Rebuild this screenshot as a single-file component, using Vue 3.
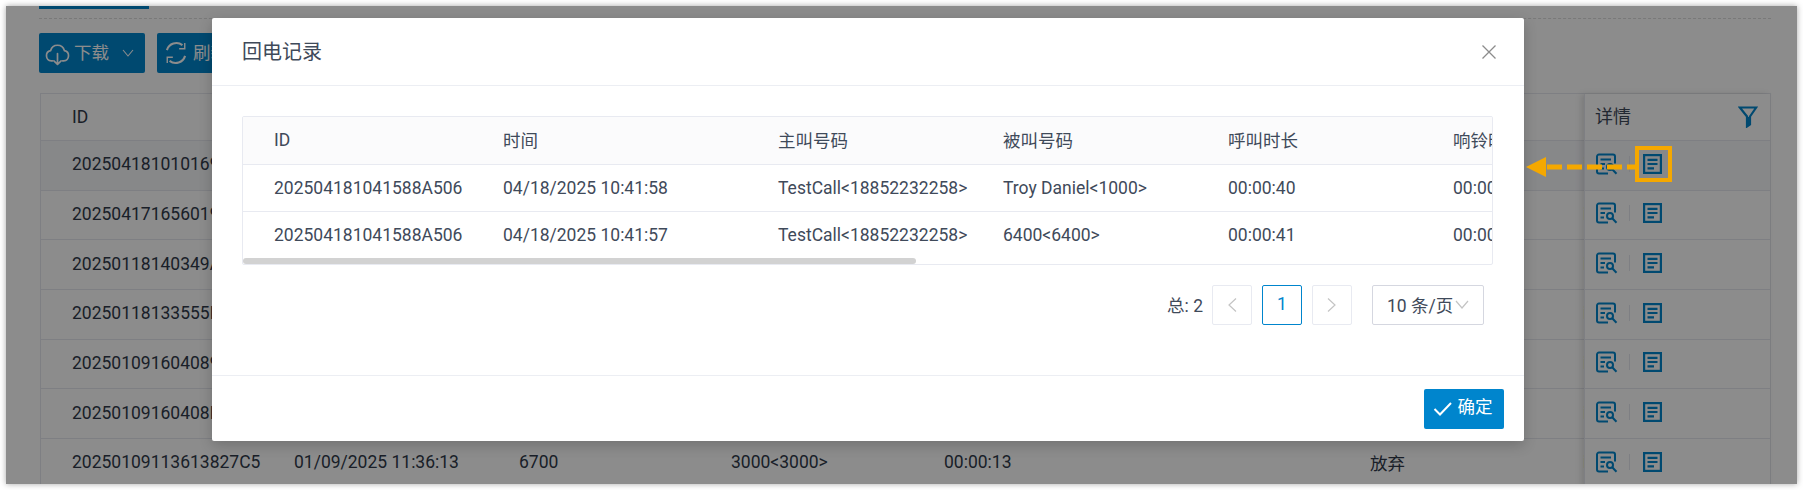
<script setup>
const bgRows = [
  { id: '202504181010169', hover: true },
  { id: '202504171656019' },
  { id: '20250118140349A' },
  { id: '20250118133555B' },
  { id: '202501091604089' },
  { id: '20250109160408B' },
  { id: '20250109113613827C5', time: '01/09/2025 11:36:13', from: '6700', to: '3000<3000>', dur: '00:00:13', status: '放弃' }
]
const modalRows = [
  ['202504181041588A506', '04/18/2025 10:41:58', 'TestCall<18852232258>', 'Troy Daniel<1000>', '00:00:40', '00:00:00'],
  ['202504181041588A506', '04/18/2025 10:41:57', 'TestCall<18852232258>', '6400<6400>', '00:00:41', '00:00:00']
]
const modalHead = ['ID', '时间', '主叫号码', '被叫号码', '呼叫时长', '响铃时长']
</script>

<template>
  <div class="root">
    <div class="page">
      <div class="tabs"><span class="tab-line"></span></div>
      <div class="toolbar">
        <button class="btn btn-down">
          <svg width="27" height="27" viewBox="0 0 24 24" fill="none" stroke="#fff" stroke-width="1.500" stroke-linecap="round" stroke-linejoin="round">
            <path d="M7.500 18.500H6.500a4.600 4.600 0 0 1-.6-9.100 6.300 6.300 0 0 1 12.200 0 4.600 4.600 0 0 1-.6 9.100h-1" />
            <path d="M12 12v9.500M8.800 18.500l3.200 3.200 3.200-3.200" />
          </svg>
          <span class="lift">下载</span>
          <svg class="caret" width="12" height="8" viewBox="0 0 12 8" fill="none" stroke="#fff" stroke-width="1.100"><path d="M1 1l5 6 5-6" /></svg>
        </button>
        <button class="btn btn-refresh">
          <svg width="28" height="28" viewBox="0 0 24 24" fill="none" stroke="#fff" stroke-width="1.800">
            <path d="M4.200 9.500A8.500 8.500 0 0 1 17.500 5.200" />
            <path d="M19.800 14.500A8.500 8.500 0 0 1 6.500 18.800" />
            <path d="M19.500 3.500v4.800h-4.800M4.500 20.500v-4.800h4.800" stroke-width="1.200" />
          </svg>
          <span class="lift">刷新</span>
        </button>
      </div>

      <div class="bg-table">
        <div class="bg-row bg-head">
          <span>ID</span><span></span><span></span><span></span><span></span><span></span><span>日</span>
        </div>
        <div v-for="r in bgRows" :key="r.id" class="bg-row" :class="{ hover: r.hover }">
          <span>{{ r.id }}</span>
          <span>{{ r.time }}</span>
          <span>{{ r.from }}</span>
          <span>{{ r.to }}</span>
          <span>{{ r.dur }}</span>
          <span>{{ r.status }}</span>
          <span class="clip-i">i</span>
        </div>

        <div class="fixed-col">
          <div class="fixed-head">
            <span class="fixed-title">详情</span>
            <svg width="20" height="22" viewBox="0 0 20 22" fill="none">
              <path d="M1.800 1.500h16.400L12 10.500V18.500l-3 2V10.500z" stroke="#0085cd" stroke-width="2.200" stroke-linejoin="miter" />
              <path d="M9 11h2.500v8L9 21z" fill="#0085cd" />
            </svg>
          </div>
          <div v-for="r in bgRows" :key="r.id" class="fixed-row" :class="{ hover: r.hover }">
            <svg class="ico" width="22" height="22" viewBox="0 0 22 22" fill="none" stroke="#0085cd" stroke-width="2">
              <path d="M19 10.500V3.500a2 2 0 0 0-2-2H3a2 2 0 0 0-2 2v15a2 2 0 0 0 2 2h9" />
              <path d="M4.500 6.500H15M4.500 11H9M4.500 15.500H8" />
              <circle cx="14" cy="14" r="3" />
              <path d="M16.200 16.200L20.500 20.800" />
            </svg>
            <i class="sep"></i>
            <svg class="ico" width="19" height="20" viewBox="0 0 19 20" fill="none" stroke="#0085cd" stroke-width="2.200">
              <rect x="1.100" y="1.100" width="16.800" height="17.800" />
              <path d="M4.500 5.800h10M4.500 10h10M4.500 14.300h6.500" />
            </svg>
          </div>
        </div>
      </div>

      <div class="overlay"></div>

      <div class="modal">
        <div class="modal-head">
          <span class="modal-title">回电记录</span>
          <svg width="16" height="16" viewBox="0 0 16 16" fill="none" stroke="#8c8c8c" stroke-width="1.300"><path d="M1.500 1.500l13 13M14.500 1.500l-13 13" /></svg>
        </div>
        <div class="modal-body">
          <div class="m-table">
            <div class="m-row m-head">
              <span v-for="h in modalHead" :key="h">{{ h }}</span>
            </div>
            <div v-for="(r, i) in modalRows" :key="i" class="m-row m-data">
              <span v-for="(c, j) in r" :key="j">{{ c }}</span>
            </div>
            <div class="m-scroll"><div class="m-thumb"></div></div>
          </div>
          <div class="pager">
            <span class="total">总: 2</span>
            <span class="pg pg-off">
              <svg width="10" height="16" viewBox="0 0 10 16" fill="none" stroke="#c4c4c4" stroke-width="1.200"><path d="M9 1.500L2 8l7 6.500" /></svg>
            </span>
            <span class="pg pg-on">1</span>
            <span class="pg pg-off">
              <svg width="10" height="16" viewBox="0 0 10 16" fill="none" stroke="#c4c4c4" stroke-width="1.200"><path d="M1 1.500L8 8l-7 6.500" /></svg>
            </span>
            <span class="size">
              <span>10 条/页</span>
              <svg width="14" height="9" viewBox="0 0 14 9" fill="none" stroke="#c4c4c4" stroke-width="1.200"><path d="M1 1l6 7 6-7" /></svg>
            </span>
          </div>
        </div>
        <div class="modal-foot">
          <button class="ok">
            <svg width="20" height="16" viewBox="0 0 20 16" fill="none" stroke="#fff" stroke-width="2"><path d="M1.500 8l5.500 5.500L18 2" /></svg>
            <span class="ok-text">确定</span>
          </button>
        </div>
      </div>

      <div class="mark-box"></div>
      <svg class="arrow" width="116" height="20" viewBox="0 0 116 20">
        <path d="M0 10L20 0v20z" fill="#f5a800" />
        <path d="M21 10H110" stroke="#f5a800" stroke-width="5" stroke-dasharray="15 5" fill="none" />
      </svg>
    </div>
  </div>
</template>

<style scoped>
.root {
  width: 1803px;
  height: 490px;
  padding: 6px;
  box-sizing: border-box;
  background: #fff;
  font-family: Roboto, "Noto Sans CJK SC", sans-serif;
  font-size: 17.500px;
  color: #3f4a5a;
}
.page {
  position: relative;
  width: 1791px;
  height: 478px;
  background: #fff;
  overflow: hidden;
  box-shadow: 0 0 6px rgba(0, 0, 0, .35);
}
.tabs {
  height: 12px;
  margin: 0 26px 0 33px;
  border-bottom: 1px dashed #dcdcdc;
}
.tab-line {
  display: block;
  width: 110px;
  height: 3px;
  background: #0085cd;
}
.toolbar {
  display: flex;
  gap: 12px;
  margin: 14px 0 0 33px;
}
.btn {
  height: 40px;
  display: flex;
  align-items: center;
  gap: 3px;
  padding: 0 0 0 5px;
  border: 0;
  border-radius: 2px;
  background: #0085cd;
  color: #fff;
  font: inherit;
}
.lift { padding-bottom: 3px; }
.btn-down { width: 106px; }
.btn-refresh { width: 120px; }
.caret { margin-left: 10px; }
.bg-table {
  position: relative;
  margin: 20px 26px 0 34px;
  border: 1px solid #e6e8ee;
  border-bottom: 0;
}
.bg-row {
  display: grid;
  grid-template-columns: 221px 225px 212px 213px 426px 213px 1fr;
  height: 49.670px;
  box-sizing: border-box;
  border-bottom: 1px solid #e6e8ee;
  align-items: center;
  white-space: nowrap;
  color: #303a4a;
}
.bg-row span { padding-left: 32px; overflow: hidden; padding-bottom: 2px; }
.bg-row span:first-child { padding-left: 31px; }
.bg-head { height: 47px; }
.bg-head span { padding-bottom: 0; }
.hover { background: #f6f7fa; }
.fixed-col {
  position: absolute;
  top: 0;
  right: 0;
  width: 186px;
  background: #fff;
  box-shadow: -3px 0 6px rgba(0, 0, 0, .12);
  border-left: 1px solid #e6e8ee;
  box-sizing: border-box;
}
.fixed-head {
  height: 47px;
  display: flex;
  align-items: center;
  justify-content: space-between;
  padding: 0 12px 0 10px;
  border-bottom: 1px solid #e6e8ee;
  box-sizing: border-box;
  font-size: 18px;
}
.fixed-title { padding-bottom: 4px; }
.fixed-row {
  height: 49.670px;
  display: flex;
  align-items: center;
  padding: 0 0 3px 11px;
  box-sizing: border-box;
  border-bottom: 1px solid #e6e8ee;
}
.fixed-row:not(.hover) { background: #fff; }
.ico { flex: none; }
.sep {
  width: 1px;
  height: 16px;
  background: #e6e8ee;
  margin: 0 13px 0 11px;
}
.overlay {
  position: absolute;
  inset: 0;
  background: rgba(0, 0, 0, .45);
}
.modal {
  position: absolute;
  left: 206px;
  top: 12px;
  width: 1312px;
  height: 423px;
  background: #fff;
  border-radius: 2px;
  box-shadow: 0 4px 14px rgba(0, 0, 0, .2);
  display: flex;
  flex-direction: column;
}
.modal-head {
  height: 68px;
  flex: none;
  box-sizing: border-box;
  padding: 0 27px 0 30px;
  display: flex;
  align-items: center;
  justify-content: space-between;
  border-bottom: 1px solid #eceef3;
}
.modal-title {
  font-size: 20px;
  color: #3f4a5a;
  padding-bottom: 2px;
}
.modal-body {
  flex: 1;
  padding: 30px 31px 0 30px;
}
.m-table {
  width: 1251px;
  box-sizing: border-box;
  border: 1px solid #e8eaf1;
  border-radius: 2px;
  overflow: hidden;
}
.m-row {
  display: grid;
  grid-template-columns: 229px 275px 225px 225px 225px 225px;
  align-items: center;
  white-space: nowrap;
  width: 1404px;
  box-sizing: border-box;
}
.m-row span { padding-left: 31px; }
.m-head {
  height: 48px;
  background: #fbfbfc;
  border-bottom: 1px solid #e8eaf1;
}
.m-head span { padding-bottom: 2px; }
.m-data {
  height: 47px;
  border-bottom: 1px solid #e8eaf1;
}
.m-data:nth-of-type(3) {
  height: 46px;
  border-bottom: 0;
}
.m-scroll { height: 6px; }
.m-thumb {
  width: 673px;
  height: 6px;
  border-radius: 3px;
  background: #d2d2d2;
}
.pager {
  margin: 20px 9px 0 0;
  display: flex;
  justify-content: flex-end;
  align-items: center;
}
.total { margin-right: 9px; padding-bottom: 2px; }
.pg {
  width: 40px;
  height: 40px;
  box-sizing: border-box;
  display: flex;
  align-items: center;
  justify-content: center;
  border: 1px solid #e8eaf1;
  border-radius: 2px;
  margin-right: 10px;
}
.pg-on {
  border-color: #0085cd;
  color: #0085cd;
  padding-bottom: 2px;
}
.size {
  width: 112px;
  height: 40px;
  box-sizing: border-box;
  margin-left: 10px;
  display: flex;
  align-items: center;
  justify-content: space-between;
  padding: 0 14px 2px 14px;
  border: 1px solid #d5d7e0;
  border-radius: 2px;
}
.modal-foot {
  height: 66px;
  flex: none;
  box-sizing: border-box;
  border-top: 1px solid #eceef3;
  padding: 13px 20px 0 0;
  display: flex;
  justify-content: flex-end;
}
.ok {
  width: 80px;
  height: 40px;
  border: 0;
  border-radius: 2px;
  background: #0085cd;
  color: #fff;
  font: inherit;
  display: flex;
  align-items: center;
  justify-content: center;
  gap: 5px;
  padding: 0 3px 0 0;
}
.ok-text { padding-bottom: 7px; }
.mark-box {
  position: absolute;
  left: 1629px;
  top: 140px;
  width: 37px;
  height: 36px;
  box-sizing: border-box;
  border: 4px solid #f5a800;
}
.arrow {
  position: absolute;
  left: 1520px;
  top: 151px;
}
</style>

<style>
html, body { margin: 0; overflow: hidden; }
</style>
